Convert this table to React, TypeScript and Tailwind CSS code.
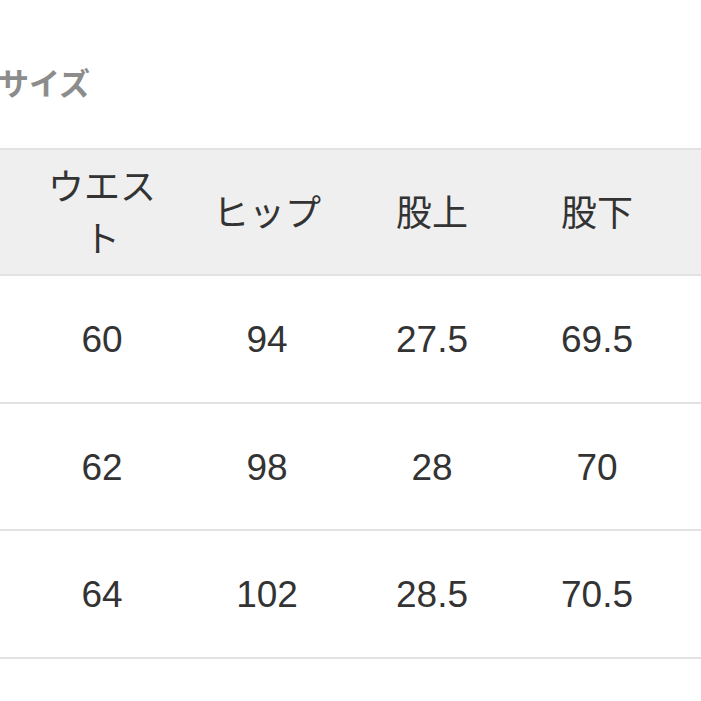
const headers = ['サイズ', 'ウエスト', 'ヒップ', '股上', '股下']

const rows = [
  ['S', '60', '94', '27.5', '69.5'],
  ['M', '62', '98', '28', '70'],
  ['L', '64', '102', '28.5', '70.5'],
]

export default function App() {
  return (
    <div className="w-[701px] h-[701px] overflow-hidden bg-white font-['Liberation_Sans','Noto_Sans_CJK_JP',sans-serif] text-[#333]">
      <div className="pt-[65px]">
        <h2 className="-ml-[2px] text-[31px] leading-[40px] font-semibold text-[#8c8c8c]">サイズ</h2>

        {/* 表（左端の列は画面外） */}
        <div className="mt-[43px] -ml-[145.5px] w-[1000px]">
          <div className="grid grid-cols-[165px_165px_165px_165px_165px] h-[128px] items-center border-y-2 border-[#e2e2e2] bg-[#efefef]">
            {headers.map((h) => (
              <div key={h} className="px-4 pt-[4px] text-center text-[36px] leading-[52px]">
                {h}
              </div>
            ))}
          </div>
          {rows.map((row) => (
            <div
              key={row[0]}
              className="grid grid-cols-[165px_165px_165px_165px_165px] h-[127.5px] items-center border-b-2 border-[#e2e2e2]"
            >
              {row.map((cell, i) => (
                <div key={i} className="px-4 pt-[3px] text-center text-[37px] leading-[50px]">
                  {cell}
                </div>
              ))}
            </div>
          ))}
        </div>
      </div>
    </div>
  )
}
